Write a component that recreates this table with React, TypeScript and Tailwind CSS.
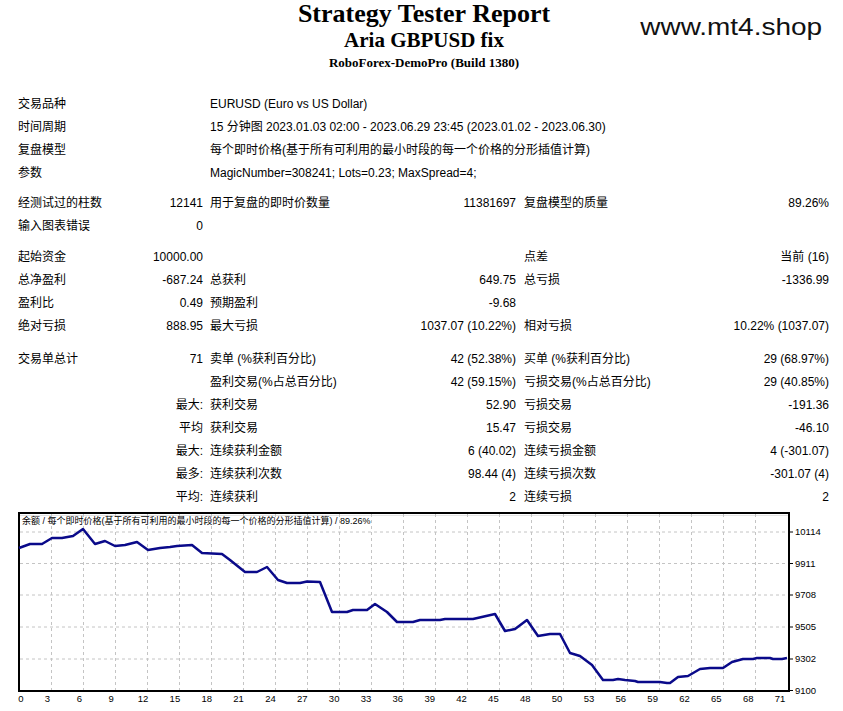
import React from 'react';

type Cells = [string, string, string, string, string, string];
type RowDef =
  | { kind: 'span'; label: string; text: string }
  | { kind: 'cells'; c: Cells }
  | { kind: 'gap'; h: 'a' | 'b' | 'c' };

const rows: RowDef[] = [
  { kind: 'span', label: '交易品种', text: 'EURUSD (Euro vs US Dollar)' },
  { kind: 'span', label: '时间周期', text: '15 分钟图 2023.01.03 02:00 - 2023.06.29 23:45 (2023.01.02 - 2023.06.30)' },
  { kind: 'span', label: '复盘模型', text: '每个即时价格(基于所有可利用的最小时段的每一个价格的分形插值计算)' },
  { kind: 'span', label: '参数', text: 'MagicNumber=308241; Lots=0.23; MaxSpread=4;' },
  { kind: 'gap', h: 'a' },
  { kind: 'cells', c: ['经测试过的柱数', '12141', '用于复盘的即时价数量', '11381697', '复盘模型的质量', '89.26%'] },
  { kind: 'cells', c: ['输入图表错误', '0', '', '', '', ''] },
  { kind: 'gap', h: 'b' },
  { kind: 'cells', c: ['起始资金', '10000.00', '', '', '点差', '当前 (16)'] },
  { kind: 'cells', c: ['总净盈利', '-687.24', '总获利', '649.75', '总亏损', '-1336.99'] },
  { kind: 'cells', c: ['盈利比', '0.49', '预期盈利', '-9.68', '', ''] },
  { kind: 'cells', c: ['绝对亏损', '888.95', '最大亏损', '1037.07 (10.22%)', '相对亏损', '10.22% (1037.07)'] },
  { kind: 'gap', h: 'c' },
  { kind: 'cells', c: ['交易单总计', '71', '卖单 (%获利百分比)', '42 (52.38%)', '买单 (%获利百分比)', '29 (68.97%)'] },
  { kind: 'cells', c: ['', '', '盈利交易(%占总百分比)', '42 (59.15%)', '亏损交易(%占总百分比)', '29 (40.85%)'] },
  { kind: 'cells', c: ['', '最大:', '获利交易', '52.90', '亏损交易', '-191.36'] },
  { kind: 'cells', c: ['', '平均', '获利交易', '15.47', '亏损交易', '-46.10'] },
  { kind: 'cells', c: ['', '最大:', '连续获利金额', '6 (40.02)', '连续亏损金额', '4 (-301.07)'] },
  { kind: 'cells', c: ['', '最多:', '连续获利次数', '98.44 (4)', '连续亏损次数', '-301.07 (4)'] },
  { kind: 'cells', c: ['', '平均:', '连续获利', '2', '连续亏损', '2'] },
];

const gridCols = 'grid grid-cols-[110px_75px_150px_163px_155px_158px] h-[23px] items-center leading-[16px] whitespace-nowrap';

function Row({ r }: { r: RowDef }) {
  if (r.kind === 'gap') {
    if (r.h === 'a') return <div className="h-[7px]" />;
    if (r.h === 'b') return <div className="h-[8px]" />;
    return <div className="h-[10px]" />;
  }
  if (r.kind === 'span') {
    return (
      <div className={gridCols}>
        <div>{r.label}</div>
        <div />
        <div className="col-span-4 pl-[7px]">{r.text}</div>
      </div>
    );
  }
  const c = r.c;
  return (
    <div className={gridCols}>
      <div>{c[0]}</div>
      <div className="text-right">{c[1]}</div>
      <div className="pl-[7px]">{c[2]}</div>
      <div className="text-right">{c[3]}</div>
      <div className="pl-[8px]">{c[4]}</div>
      <div className="text-right">{c[5]}</div>
    </div>
  );
}

const points: [number, number][] = [
  [19, 548], [30, 544], [42, 544], [52, 538], [62, 538], [73, 536], [83, 529], [95, 544], [105, 541], [115, 546],
  [125, 545], [137, 542], [148, 550], [160, 548], [170, 547], [177, 546], [192, 545], [202, 553], [222, 554], [230, 560],
  [245, 572], [257, 572], [267, 567], [278, 580], [287, 583], [300, 583], [307, 581.5], [320, 582], [332, 612], [347, 612],
  [353, 610], [367, 610], [375, 604], [387, 612], [397, 622], [413, 622], [420, 620], [440, 620], [445, 619], [473, 619],
  [495, 614], [505, 631], [515, 629], [527, 620], [538, 636], [550, 634], [560, 634], [570, 653], [580, 656], [592, 665],
  [603, 680], [613, 680], [618, 679], [625, 680], [635, 681], [638, 682], [660, 682], [667, 683], [670, 683], [678, 677],
  [688, 676], [700, 669], [710, 668], [723, 668], [732, 662], [743, 659], [753, 659], [757, 658], [770, 658], [773, 659],
  [782, 659], [787, 658],
];

const xLabels = ['0', '3', '6', '9', '12', '15', '18', '21', '24', '27', '30', '33', '36', '39', '42', '45', '48', '50', '53', '56', '59', '62', '65', '68', '71'];
const yLabels: [string, number][] = [
  ['10114', 532], ['9911', 563.5], ['9708', 595], ['9505', 627], ['9302', 659], ['9100', 690.5],
];
const hGrid = [532, 563.5, 595, 627, 659];
const vGrid = Array.from({ length: 23 }, (_, j) => 51 + 32 * j);

function Chart() {
  return (
    <svg width="843" height="199" viewBox="0 512 843 199" className="block mt-[4px]">
      <line x1="20" y1="515.5" x2="788" y2="515.5" stroke="#e4e4e4" strokeWidth="1" />
      {hGrid.map((y) => (
        <line key={'h' + y} x1="20" y1={y} x2="788" y2={y} stroke="#c4c4c4" strokeWidth="1" strokeDasharray="3 3" />
      ))}
      {vGrid.map((x) => (
        <line key={'v' + x} x1={x + 0.5} y1="514" x2={x + 0.5} y2="690" stroke="#c4c4c4" strokeWidth="1" strokeDasharray="3 3" />
      ))}
      <rect x="19" y="513" width="770" height="178" fill="none" stroke="#000" strokeWidth="2" />
      {yLabels.map(([t, y]) => (
        <g key={t}>
          <line x1="789" y1={y} x2="793" y2={y} stroke="#000" strokeWidth="1" />
          <text x="795" y={y + 3.3} fontSize="9.5" fill="#000" fontFamily="'Liberation Sans', sans-serif">{t}</text>
        </g>
      ))}
      {xLabels.map((t, k) => (
        <text
          key={t + k}
          x={k === 0 ? 21 : 47.5 + 31.85 * (k - 1)}
          y={702}
          fontSize="9.5"
          textAnchor="middle"
          fill="#000"
          fontFamily="'Liberation Sans', sans-serif"
        >
          {t}
        </text>
      ))}
      <text x="22" y="524" fontSize="9" fill="#000" fontFamily="'Liberation Sans', 'Noto Sans CJK SC', sans-serif">
        余额 / 每个即时价格(基于所有可利用的最小时段的每一个价格的分形插值计算) / 89.26%
      </text>
      <polyline
        points={points.map((p) => p.join(',')).join(' ')}
        fill="none"
        stroke="#0a0a8a"
        strokeWidth="2.5"
        strokeLinejoin="round"
      />
    </svg>
  );
}

export default function App() {
  return (
    <div className="w-[843px] h-[711px] bg-white text-black overflow-hidden font-['Liberation_Sans','Noto_Sans_CJK_SC',sans-serif] text-[12px]">
      <div className="h-[92px] grid grid-cols-[1fr_auto_1fr] pl-[5px]">
        <div />
        <div className="flex flex-col items-center font-['Liberation_Serif',serif] font-bold">
          <div className="text-[26px] leading-[28px]">Strategy Tester Report</div>
          <div className="text-[21px] leading-[24px]">Aria GBPUSD fix</div>
          <div className="text-[13px] leading-[16px] mt-[3px]">RoboForex-DemoPro (Build 1380)</div>
        </div>
        <div className="flex justify-end pr-[21px]">
          <div className="mt-[13px] text-[24px] leading-[28px] text-[#111] font-['Liberation_Sans',sans-serif] scale-x-[1.165] origin-right">
            www.mt4.shop
          </div>
        </div>
      </div>
      <div className="pl-[18px]">
        {rows.map((r, i) => (
          <Row key={i} r={r} />
        ))}
      </div>
      <Chart />
    </div>
  );
}
